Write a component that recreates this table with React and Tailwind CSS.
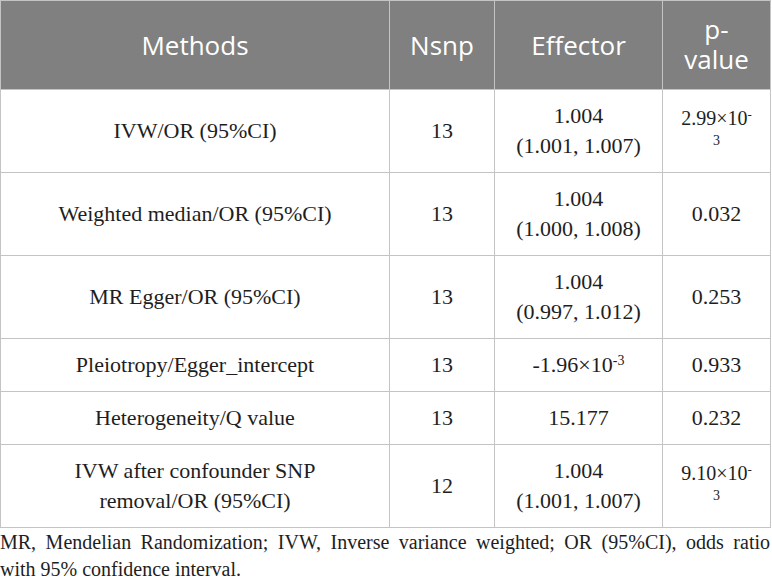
const rows = [
  { method: 'IVW/OR (95%CI)', n: '13', eff: ['1.004', '(1.001, 1.007)'], p: 'wrap', pv: '2.99' },
  { method: 'Weighted median/OR (95%CI)', n: '13', eff: ['1.004', '(1.000, 1.008)'], p: '0.032' },
  { method: 'MR Egger/OR (95%CI)', n: '13', eff: ['1.004', '(0.997, 1.012)'], p: '0.253' },
  { method: 'Pleiotropy/Egger_intercept', n: '13', eff: 'sci', p: '0.933' },
  { method: 'Heterogeneity/Q value', n: '13', eff: ['15.177'], p: '0.232' },
  { method: ['IVW after confounder SNP', 'removal/OR (95%CI)'], n: '12', eff: ['1.004', '(1.001, 1.007)'], p: 'wrap', pv: '9.10' },
];

function Lines({ items }) {
  return items.map((t, i) => <div key={i}>{t}</div>);
}

function PValue({ row }) {
  if (row.p !== 'wrap') return row.p;
  return (
    <>
      <div className="text-[20px] leading-[28px]">
        {row.pv}×10<sup className="text-[13px]">-</sup>
      </div>
      <div className="leading-[26px]">
        <sup className="text-[14px]">3</sup>
      </div>
    </>
  );
}

export default function App() {
  return (
    <div className="w-[772px] h-[585px] bg-white overflow-hidden">
      <table
        className="w-[770px] border-collapse table-fixed text-center text-[#1e1e1e]"
        style={{ fontFamily: '"Liberation Serif", "DejaVu Serif", serif' }}
      >
        <colgroup>
          <col className="w-[389px]" />
          <col className="w-[105px]" />
          <col className="w-[168px]" />
          <col className="w-[108px]" />
        </colgroup>
        <thead>
          <tr
            className="bg-[#808080] text-white text-[26px] leading-[30px]"
            style={{ fontFamily: '"Open Sans", "Noto Sans", sans-serif' }}
          >
            <th className="font-normal border border-[#c4c4c4] py-[14px]">Methods</th>
            <th className="font-normal border border-[#c4c4c4] py-[14px]">Nsnp</th>
            <th className="font-normal border border-[#c4c4c4] py-[14px]">Effector</th>
            <th className="font-normal border border-[#c4c4c4] py-[14px]">
              <div className="leading-[28px]">p-</div>
              <div className="leading-[32px]">value</div>
            </th>
          </tr>
        </thead>
        <tbody className="text-[22px] leading-[30px]">
          {rows.map((r, i) => (
            <tr key={i}>
              <td className="border border-[#c4c4c4] py-[11px]">
                {Array.isArray(r.method) ? <Lines items={r.method} /> : r.method}
              </td>
              <td className="border border-[#c4c4c4] py-[11px]">{r.n}</td>
              <td className="border border-[#c4c4c4] py-[11px]">
                {r.eff === 'sci' ? (
                  <span>
                    -1.96×10<sup className="text-[14px]">-3</sup>
                  </span>
                ) : (
                  <Lines items={r.eff} />
                )}
              </td>
              <td className="border border-[#c4c4c4] py-[11px]">
                <PValue row={r} />
              </td>
            </tr>
          ))}
        </tbody>
      </table>
      <div
        className="w-[770px] text-[20px] leading-[27px] text-[#1e1e1e] mt-[1px]"
        style={{ fontFamily: '"Liberation Serif", "DejaVu Serif", serif' }}
      >
        <p className="text-justify [text-align-last:justify]">
          MR, Mendelian Randomization; IVW, Inverse variance weighted; OR (95%CI), odds ratio
        </p>
        <p>with 95% confidence interval.</p>
      </div>
    </div>
  );
}
